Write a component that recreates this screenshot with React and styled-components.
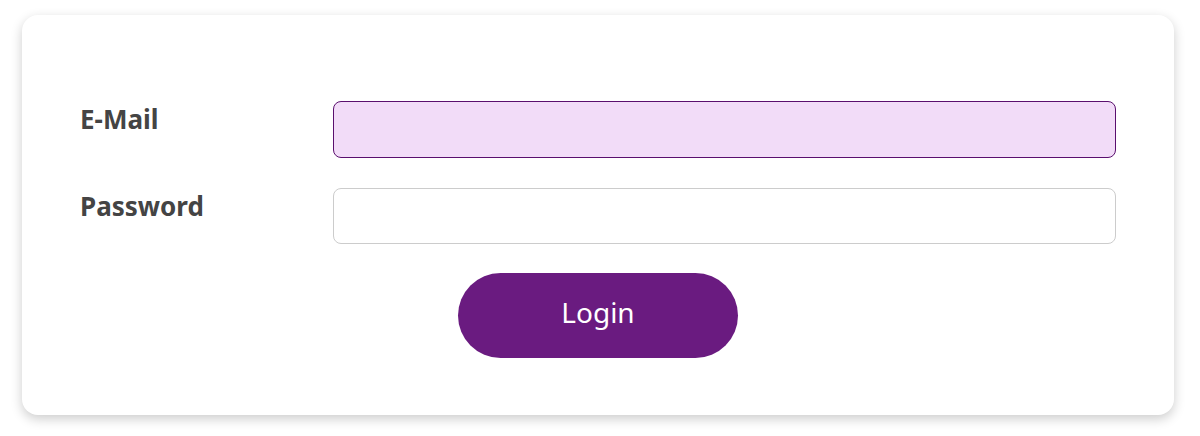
import styled, { createGlobalStyle } from "styled-components";

const GlobalStyle = createGlobalStyle`
    html, body {
        margin: 0;
        background: #ffffff;
        font-family: "Noto Sans", "Open Sans", sans-serif;
    }
    #root {
        padding: 15px 0 21px;
    }
`

export default function App() {
    return (
        <>
            <GlobalStyle />
            <Scard>
                <Sform onSubmit={(e) => e.preventDefault()}>
                    <Slabel htmlFor="email">E-Mail</Slabel>
                    <Sinput id="email" type="email" $focused />
                    <Slabel htmlFor="password">Password</Slabel>
                    <Sinput id="password" type="password" />
                    <Sbutton type="submit">Login</Sbutton>
                </Sform>
            </Scard>
        </>
    )
}

const Scard = styled.div`
    box-sizing: border-box;
    width: 1152px;
    margin: 0 0 0 22px;
    padding: 86px 58px 57px;
    background: white;
    border-radius: 16px;
    box-shadow: 0 4px 12px rgba(0, 0, 0, 0.2);
`

const Sform = styled.form`
    display: grid;
    grid-template-columns: 253px 1fr;
    row-gap: 30px;
    margin: 0;
`

const Slabel = styled.label`
    align-self: start;
    font-size: 26px;
    font-weight: 700;
    line-height: 36px;
    color: #444444;
`

const Sinput = styled.input`
    box-sizing: border-box;
    height: 56.5px;
    width: 100%;
    margin: 0;
    padding: 0 16px;
    border-radius: 8px;
    border: 1px solid ${(p) => (p.$focused ? "#5a0f6e" : "#cccccc")};
    background: ${(p) => (p.$focused ? "#f2dcf8" : "#ffffff")};
    font-family: inherit;
    font-size: 20px;
    outline: none;
`

const Sbutton = styled.button`
    grid-column: 1 / -1;
    justify-self: center;
    box-sizing: border-box;
    width: 280px;
    height: 85px;
    margin-top: -1px;
    padding: 0 0 8px;
    border: none;
    border-radius: 43px;
    background: #6a1b80;
    color: white;
    font-family: inherit;
    font-size: 28px;
    cursor: pointer;
`
